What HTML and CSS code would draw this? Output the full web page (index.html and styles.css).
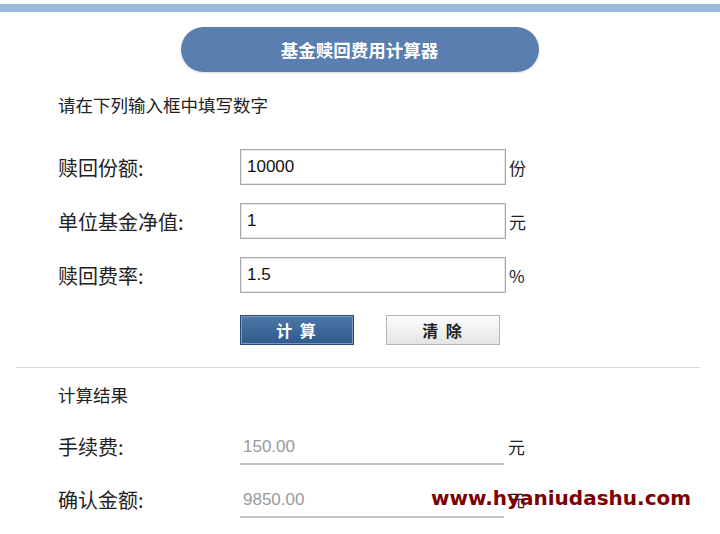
FILE: index.html
```html
<!DOCTYPE html>
<html lang="zh-CN">
<head>
    <meta charset="UTF-8">
    <meta name="viewport" content="width=device-width, initial-scale=1.0">
    <title>基金赎回费用计算器</title>
    <link rel="stylesheet" href="styles.css">
</head>
<body>
    <div class="topbar"></div>

    <div class="page">
        <div class="title-wrap">
            <h1 class="title">基金赎回费用计算器</h1>
        </div>

        <p class="hint">请在下列输入框中填写数字</p>

        <div class="form">
            <div class="row">
                <label class="label">赎回份额:</label>
                <input class="field" type="text" value="10000">
                <span class="unit">份</span>
            </div>
            <div class="row">
                <label class="label">单位基金净值:</label>
                <input class="field" type="text" value="1">
                <span class="unit">元</span>
            </div>
            <div class="row">
                <label class="label">赎回费率:</label>
                <input class="field" type="text" value="1.5">
                <span class="unit">%</span>
            </div>

            <div class="actions">
                <button class="btn btn-calc">计 算</button>
                <button class="btn btn-clear">清 除</button>
            </div>
        </div>

        <hr class="divider">

        <p class="hint result-title">计算结果</p>

        <div class="results">
            <div class="row result-row">
                <span class="label">手续费:</span>
                <span class="value">150.00</span>
                <span class="unit">元</span>
            </div>
            <div class="row result-row">
                <span class="label">确认金额:</span>
                <span class="value">9850.00</span>
                <span class="unit">元</span>
            </div>
        </div>

        <div class="watermark">www.hyaniudashu.com</div>
    </div>
</body>
</html>
```

FILE: styles.css
```css
:root {
    --bar-blue: #9abbdc;
    --pill-blue: #5a7eb0;
    --text-color: #222;
    --muted: #9a9a9a;
}

body {
    margin: 0;
    padding: 0;
    background: #fff;
    color: var(--text-color);
    font-family: "Liberation Sans", "Noto Sans CJK SC", sans-serif;
}

.topbar {
    height: 8px;
    margin-top: 4px;
    background-color: var(--bar-blue);
}

.page {
    position: relative;
    width: 720px;
    height: 522px;
}

.title-wrap {
    display: flex;
    justify-content: center;
    padding-top: 15px;
    padding-right: 1px;
}

.title {
    margin: 0;
    width: 358px;
    height: 45px;
    line-height: 45px;
    border-radius: 23px;
    background-color: var(--pill-blue);
    box-shadow: 0 1px 2px rgba(0, 0, 0, 0.15);
    color: #fff;
    text-align: center;
    font-size: 17.5px;
    font-weight: bold;
    font-family: "Noto Sans CJK SC", sans-serif;
}

.hint {
    margin: 22px 0 0 58px;
    font-size: 17.5px;
    line-height: 22px;
    font-family: "Noto Sans CJK SC", sans-serif;
}

.form {
    padding-top: 33px;
}

.row {
    display: flex;
    align-items: center;
    height: 36px;
    margin-bottom: 18px;
}

.label {
    width: 182px;
    padding-left: 58px;
    font-size: 20px;
    font-family: "Noto Sans CJK SC", sans-serif;
}

.field {
    box-sizing: border-box;
    width: 266px;
    height: 36px;
    margin: 0;
    padding: 0 6px;
    border: 1px solid #a9a9a9;
    box-shadow: inset 0 0 0 1px #e6e6e6;
    font-size: 17px;
    font-family: "Liberation Sans", sans-serif;
    color: #111;
}

.unit {
    margin-left: 3px;
    font-size: 17px;
    font-family: "Noto Sans CJK SC", "Liberation Sans", sans-serif;
}

.actions {
    display: flex;
    gap: 32px;
    padding-left: 240px;
    margin-top: 22px;
}

.btn {
    box-sizing: border-box;
    width: 114px;
    height: 30px;
    margin: 0;
    padding: 0;
    font-size: 16px;
    font-weight: bold;
    font-family: "Noto Sans CJK SC", sans-serif;
    letter-spacing: 2px;
    cursor: pointer;
}

.btn-calc {
    border: 1px solid #2c4a72;
    background: linear-gradient(#4d78a8, #2f5a8c);
    box-shadow: inset 0 0 0 1px #7898c0;
    color: #fff;
}

.btn-clear {
    border: 1px solid #b5b5b5;
    background: linear-gradient(#fdfdfd, #e4e4e4);
    color: #222;
}

.divider {
    margin: 22px 20px 0 16px;
    border: 0;
    border-top: 1px solid #d8d8d8;
}

.result-title {
    margin-top: 16px;
}

.results {
    padding-top: 22px;
}

.result-row {
    margin-bottom: 17px;
}

.value {
    box-sizing: border-box;
    width: 264px;
    height: 38px;
    padding: 4px 0 0 3px;
    line-height: 32px;
    border-bottom: 2px solid #c4c4c4;
    color: var(--muted);
    font-size: 17px;
    font-family: "Liberation Sans", sans-serif;
}

.result-row .unit {
    margin-left: 4px;
}

.watermark {
    position: absolute;
    left: 431px;
    top: 474px;
    color: #7d0000;
    font-size: 20px;
    font-weight: bold;
    font-family: "DejaVu Sans", sans-serif;
}
```
